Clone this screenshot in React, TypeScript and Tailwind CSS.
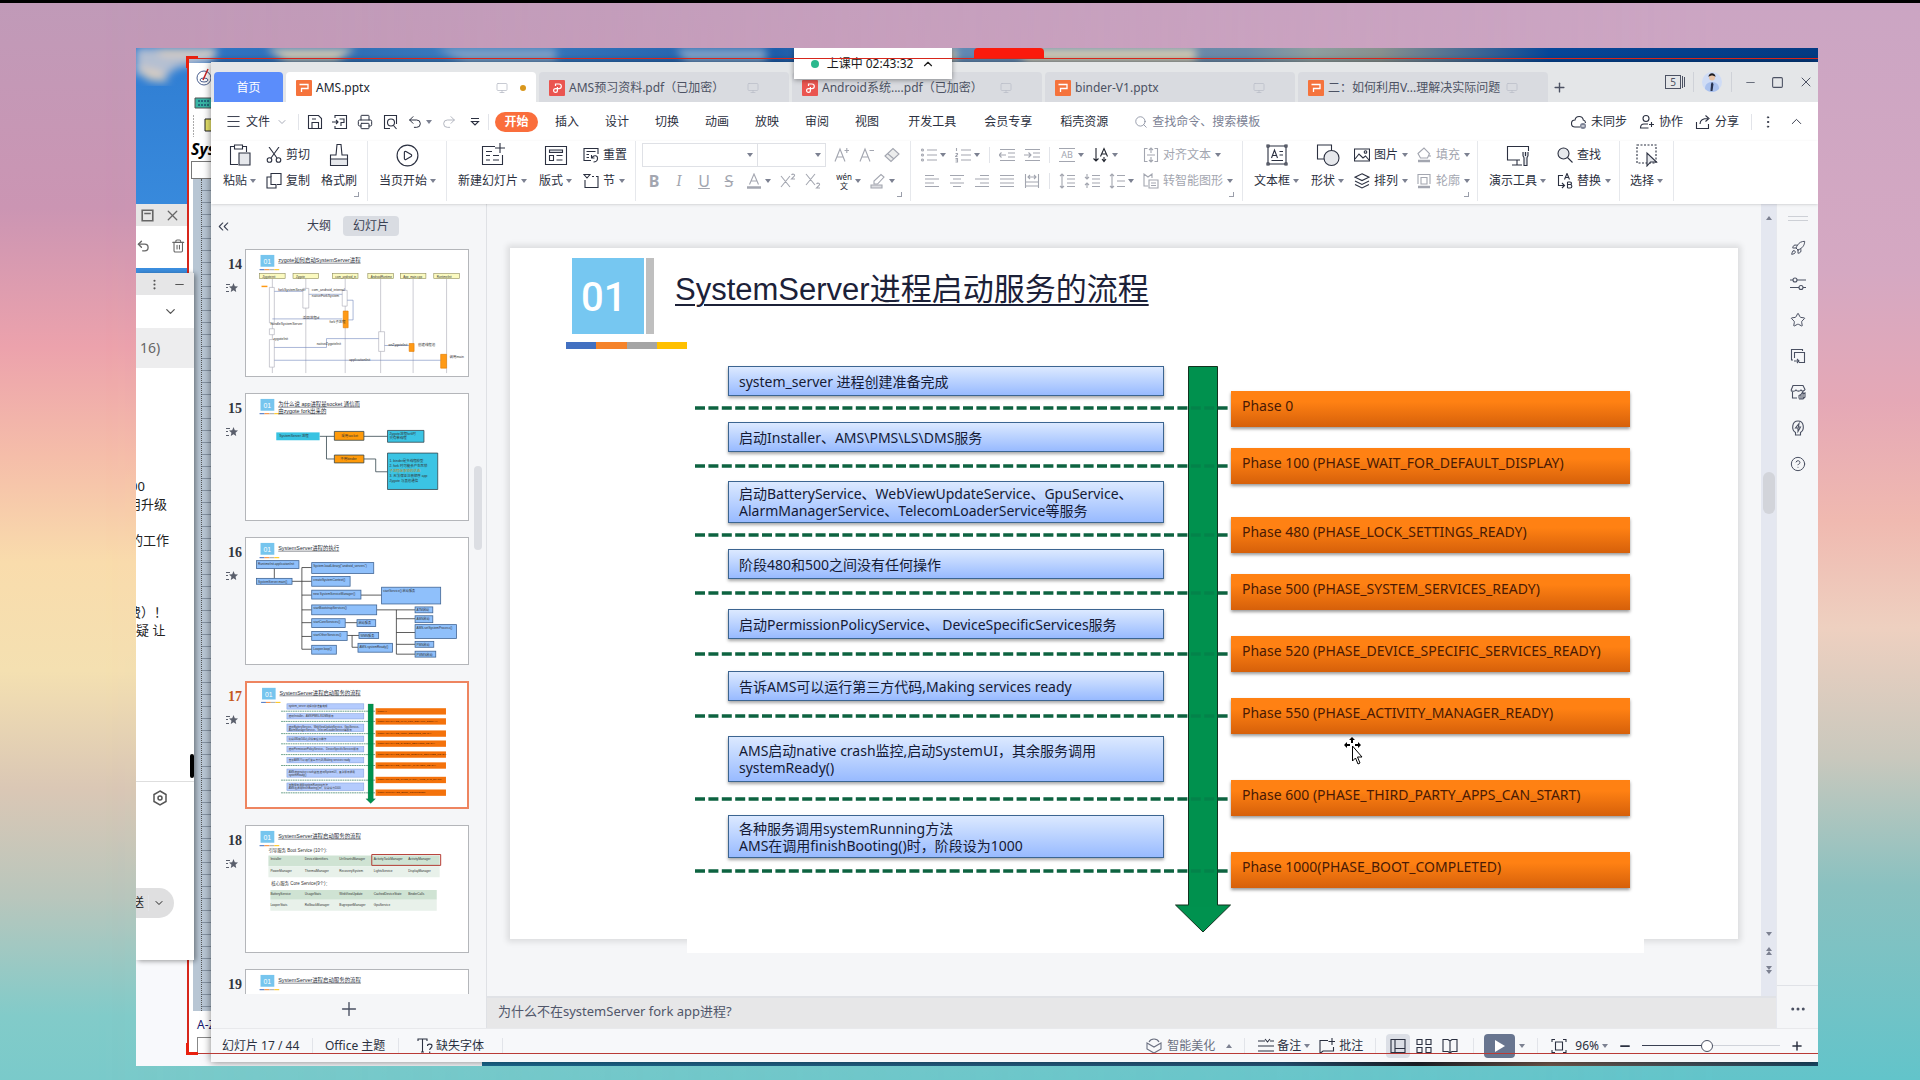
import React from 'react';
import {
  ChevronDown, ChevronUp, ChevronsLeft, CirclePlay, CircleHelp, Ellipsis, EllipsisVertical, Menu, Minus, Monitor,
  Plus, Printer, Redo2, Rocket, Search, Square, Star, Trash2, Undo2, X,
} from 'lucide-react';

type IconProps = { size?: number; box?: number; className?: string; children: React.ReactNode };

const Icon = ({ size = 16, box = 16, className = '', children }: IconProps) => (
  <svg
    width={size}
    height={size}
    viewBox={`0 0 ${box} ${box}`}
    fill="none"
    stroke="currentColor"
    strokeWidth={1.1}
    className={`shrink-0 ${className}`}
    aria-hidden="true"
  >
    {children}
  </svg>
);

const Big = ({ children }: { children: React.ReactNode }) => <Icon size={24} box={24}>{children}</Icon>;

const Caret = ({ up = false }: { up?: boolean }) => (
  <svg width="6" height="4" viewBox="0 0 6 4" className="shrink-0 fill-[#7c8191]" aria-hidden="true">
    <path d={up ? 'M0 4 3 0l3 4z' : 'M0 0h6L3 4z'} />
  </svg>
);

const Corner = () => (
  <span className="absolute right-2 bottom-1 h-[5px] w-[5px] border-r border-b border-[#9a9eaa]" />
);

const Sep = () => <span className="block h-4 w-px shrink-0 bg-[#e2e4e9]" />;

const Logo = ({ pdf = false }: { pdf?: boolean }) => (
  <svg width="16" height="16" viewBox="0 0 16 16" className="shrink-0" aria-hidden="true">
    <rect width="16" height="16" rx="1" className={pdf ? 'fill-[#ea5550]' : 'fill-[#f5733c]'} />
    {pdf ? (
      <path d="M6.5 6V4h3.500a2.300 2.300 0 0 1 0 4.600H6.500a1.900 1.900 0 1 0 1.900 1.900V7" fill="none" stroke="#fff" strokeWidth="1.2" />
    ) : (
      <path d="M3.5 4.500h8.500v4H5.500v3.500" fill="none" stroke="#fff" strokeWidth="1.300" />
    )}
  </svg>
);

/* ---------- title bar ---------- */

const tabs = [
  { name: 'AMS预习资料.pdf（已加密）', pdf: true },
  { name: 'Android系统....pdf（已加密）', pdf: true },
  { name: 'binder-V1.pptx', pdf: false },
  { name: '二：如何利用V...理解决实际问题', pdf: false },
];

const TitleBar = () => (
  <header className="flex h-10 shrink-0 items-end bg-[#e4e6e8] pl-[3px] text-xs text-[#4c5263]">
    <button className="h-[30px] w-[69px] shrink-0 rounded-t-sm bg-[#5b8dfb] pt-0.5 text-white">首页</button>
    <button className="ml-[3px] flex h-[30px] w-[250px] shrink-0 items-center gap-1 rounded-t-sm bg-white px-[10px] pt-0.5 text-[#20242e]">
      <Logo />
      AMS.pptx
      <Monitor size={12} strokeWidth={1.5} className="ml-auto text-[#b5b9c4]" />
      <span className="ml-2 h-1.5 w-1.5 rounded-full bg-[#d9971c]" />
    </button>
    {tabs.map((tab) => (
      <button
        key={tab.name}
        className="ml-[3px] flex h-[30px] w-[250px] items-center gap-1 rounded-t-sm bg-[#d9dbe0] px-[10px] pt-0.5 whitespace-nowrap"
      >
        <Logo pdf={tab.pdf} />
        {tab.name}
        <Monitor size={12} strokeWidth={1.5} className="mr-5 ml-auto shrink-0 text-[#b9bdc8]" />
      </button>
    ))}
    <button aria-label="新建标签" className="ml-1 flex h-[30px] items-center">
      <Plus size={15} strokeWidth={2.2} />
    </button>
    <div className="ml-auto flex h-10 items-center pr-1">
      <button className="flex h-[14px] items-center gap-px text-[10px]" aria-label="窗口 5">
        <span className="h-[14px] w-4 border border-current leading-3">5</span>
        <span className="h-3 w-px bg-current" />
        <span className="h-[10px] w-px bg-current" />
      </button>
      <span className="mx-2 h-5 w-px bg-[#cfd2d8]" />
      <svg width="20" height="20" viewBox="0 0 20 20" role="img" aria-label="用户头像">
        <circle cx="10" cy="10" r="10" fill="#cfdcf5" />
        <path d="M3 17c0-5 3-7 7-7s7 2 7 7c-4 4-10 4-14 0" fill="#a9c1ee" />
        <path d="m10 10 1.500 2-1 7h-2l.5-7z" fill="#27324f" />
        <circle cx="10" cy="5.500" r="3" fill="#e9c4a8" />
        <path d="M6.500 5c0-5 7-5 7 0-2-2-5-2-7 0" fill="#1d1c22" />
      </svg>
      <span className="mr-3 ml-[9px] h-5 w-px bg-[#cfd2d8]" />
      <div className="flex items-center gap-[14px]">
        <button aria-label="最小化"><Minus size={13} strokeWidth={1.5} /></button>
        <button aria-label="最大化"><Square size={13} strokeWidth={2} /></button>
        <button aria-label="关闭"><X size={16} strokeWidth={1.5} /></button>
      </div>
    </div>
  </header>
);

/* ---------- menu row ---------- */

const menus = ['插入', '设计', '切换', '动画', '放映', '审阅', '视图'];
const wideMenus = ['开发工具', '会员专享', '稻壳资源'];

const MenuRow = () => (
  <nav className="flex h-[39px] shrink-0 items-center text-xs text-[#2b3040]">
    <button className="ml-[14px] flex items-center gap-1">
      <Menu size={17} strokeWidth={1.3} />
      文件
      <ChevronDown size={12} strokeWidth={1.5} className="ml-0.5 text-[#8b90a0]" />
    </button>
    <span className="ml-2.5"><Sep /></span>
    <div className="ml-2 flex items-center gap-[9px]">
      <button aria-label="保存">
        <Icon><path d="M1.500 1.500h10l3 3v10h-13zM5 14.500v-6h6.500v6M5 5h4" /></Icon>
      </button>
      <button aria-label="输出为PDF">
        <Icon><path d="M3 4V1.500h11.500v13H3V12M0 8h6M4 6l2 2-2 2M7.500 5H12v3.500H9V12" /></Icon>
      </button>
      <button aria-label="打印"><Printer size={16} strokeWidth={1.5} /></button>
      <button aria-label="打印预览">
        <Icon><path d="M14.500 10V1.500h-12v13H8M11.500 11.500l3 3.500" /><circle cx="9" cy="8.500" r="3.500" /></Icon>
      </button>
      <button aria-label="撤销" className="flex items-center gap-[3px]">
        <Undo2 size={16} strokeWidth={1.5} />
        <Caret />
      </button>
      <button aria-label="恢复" className="text-[#b3b6c0]"><Redo2 size={16} strokeWidth={1.5} /></button>
      <button aria-label="更多" className="ml-1">
        <Icon size={10} box={10}><path d="M1 1.500h8M1.500 4.500h7L5 8z" /></Icon>
      </button>
    </div>
    <span className="ml-2"><Sep /></span>
    <button className="ml-1.5 h-5 w-[43px] rounded-full bg-[#fa6e3c] font-bold text-white">开始</button>
    <div className="ml-[17px] flex gap-[26px]">
      {menus.map((m) => <button key={m}>{m}</button>)}
    </div>
    <div className="ml-[29px] flex gap-7">
      {wideMenus.map((m) => <button key={m}>{m}</button>)}
    </div>
    <label className="ml-[26px] flex items-center gap-1 text-[#7b8194]">
      <Search size={14} strokeWidth={1.3} />
      <input
        className="w-[124px] outline-none placeholder:text-[#7b8194]"
        placeholder="查找命令、搜索模板"
        aria-label="查找命令、搜索模板"
      />
    </label>
    <div className="ml-auto flex items-center gap-3 pr-[13px]">
      <button className="flex items-center gap-1">
        <Icon>
          <path d="M9 13H4a3.500 3.500 0 0 1 0-7 4.200 4.200 0 0 1 8.300 0c1.500.4 2.200 1.500 2.200 3" />
          <circle cx="12" cy="12" r="3" className="fill-[#7b8194]" stroke="none" />
          <path d="M10.500 12h3" stroke="#fff" />
        </Icon>
        未同步
      </button>
      <button className="flex items-center gap-1">
        <Icon><circle cx="7" cy="4.500" r="3" /><path d="M9 10H5c-2 0-3.500 1-3.500 4h8M10 10.500h5M12.500 8v5" /></Icon>
        协作
      </button>
      <button className="flex items-center gap-1">
        <Icon><path d="M1.500 8v6.500h12V10M5 10c0-4 3-5.500 8-5.500M10.500 1.500l3.500 3-3.500 3" /></Icon>
        分享
      </button>
      <div className="flex items-center gap-2">
        <Sep />
        <EllipsisVertical size={16} strokeWidth={1.5} />
      </div>
      <button aria-label="折叠功能区"><ChevronUp size={17} strokeWidth={1.3} /></button>
    </div>
  </nav>
);

/* ---------- ribbon ---------- */

type ToolProps = { icon: React.ReactNode; label: string; caret?: boolean; muted?: boolean; className?: string };

const BigTool = ({ icon, label, caret = true, className = '' }: ToolProps) => (
  <button className={`grid shrink-0 grid-rows-[26px_26px] place-items-center whitespace-nowrap ${className}`}>
    {icon}
    <span className="flex items-center gap-[3px]">{label}{caret && <Caret />}</span>
  </button>
);

const SmallTool = ({ icon, label, caret = false, muted = false, className = '' }: ToolProps) => (
  <button
    className={`flex h-[26px] shrink-0 items-center gap-1 whitespace-nowrap ${muted ? 'text-[#a3a6b0]' : ''} ${className}`}
  >
    {icon}
    {label}
    {caret && <Caret />}
  </button>
);

type MiniProps = { name: string; caret?: boolean; className?: string; children: React.ReactNode };

const Mini = ({ name, caret = false, className = '', children }: MiniProps) => (
  <button aria-label={name} className={`flex shrink-0 items-center gap-[3px] ${className}`}>
    <Icon>{children}</Icon>
    {caret && <Caret />}
  </button>
);

const Letter = ({ name, className = '', children }: MiniProps) => (
  <button aria-label={name} className={`w-4 shrink-0 text-center text-base leading-5 ${className}`}>{children}</button>
);

const Group = ({ className, children }: { className: string; children: React.ReactNode }) => (
  <div className={`relative flex h-[60px] shrink-0 border-r border-[#e6e8ec] pt-px ${className}`}>{children}</div>
);

const Ribbon = () => (
  <div className="z-10 flex h-[63px] shrink-0 text-xs text-[#2b3040] shadow-sm">
    <Group className="w-[157px] pl-3">
      <BigTool
        label="粘贴"
        icon={<Big><path d="M6 3.500H2.500v18H10M15 3.500h3.500V9M6.500 2h8v4h-8z" /><path d="M11 10h11v12H11z" fill="#e6e8ec" /></Big>}
      />
      <div className="ml-[10px]">
        <SmallTool label="剪切" icon={<Icon><path d="M3 0l8 11M13 0 5 11" /><circle cx="3.500" cy="13" r="2.300" /><circle cx="12.500" cy="13" r="2.300" /></Icon>} />
        <SmallTool label="复制" icon={<Icon><path d="M5 4V.5h10v11h-4" /><path d="M5 4H1v11h9v-3.500H5z" /></Icon>} />
      </div>
      <BigTool
        className="ml-[11px]"
        caret={false}
        label="格式刷"
        icon={<Big><path d="M3.500 16h17v6.500h-17z" fill="#e6e8ec" /><path d="M3.500 16v-4H9l1-10.500h4L15 12h5.500v4" /></Big>}
      />
      <Corner />
    </Group>
    <Group className="w-[79px] pl-[11px]">
      <BigTool label="当页开始" icon={<CirclePlay size={25} strokeWidth={1.1} />} />
    </Group>
    <Group className="w-[189px] pl-[11px]">
      <BigTool
        label="新建幻灯片"
        icon={<Big><path d="M14 3.500H1.500v18h20V12M19 0v10M14 5h10M5 8.500h6M5 12.500h4M5 17h4M12 12.500h6M12 17h6" /></Big>}
      />
      <BigTool
        className="ml-3"
        label="版式"
        icon={<Big><path d="M1.500 3.500h21v18h-21zM5.500 12.500h4v5h-4zM12.500 12.500h6M12.500 17h6" /><path d="M5.500 7h13v2.500h-13z" fill="#d5d8de" /></Big>}
      />
      <div className="ml-[11px]">
        <SmallTool label="重置" icon={<Icon><path d="M8 13.500H1V1.500h14V7M3.500 4.500h9M3.500 7.500H6M3.500 10.500H6M8.500 8v3h3M9 10.500c2-3 6-2 5.500 1.500-.3 2-2 3-4 3" /></Icon>} />
        <SmallTool label="节" caret icon={<Icon><path d="M1 1.500h6L4 5zM9 3.500h2M13 3.500h2v11H2V7" /></Icon>} />
      </div>
    </Group>
    <Group className="w-[275px] flex-col pl-1.5 text-[#a3a6b0]">
      <div className="flex h-[26px] items-center">
        <div className="relative flex h-6 w-[116px] items-center border border-[#dfe1e6]">
          <select aria-label="字体" className="h-full w-full appearance-none outline-none" />
          <span className="absolute right-1"><Caret /></span>
        </div>
        <div className="relative flex h-6 w-[68px] items-center border border-l-0 border-[#dfe1e6]">
          <select aria-label="字号" className="h-full w-full appearance-none outline-none" />
          <span className="absolute right-1"><Caret /></span>
        </div>
        <div className="ml-2 flex items-center gap-[9px]">
          <Mini name="增大字号"><path d="M1 14.500 6 2l5 12.500M3 10h6M10.500 3.500H15M12.800 1v5" /></Mini>
          <Mini name="减小字号"><path d="M1 14.500 6 2l5 12.500M3 10h6M10.500 3.500H15" /></Mini>
          <Mini name="清除格式"><path d="M1 9 9 1.500 15 7l-8 7.500zM3.500 6.500 10 12" fill="#eceded" /></Mini>
        </div>
      </div>
      <div className="flex h-[26px] items-center gap-[9px] pl-1">
        <Letter name="加粗" className="font-bold">B</Letter>
        <Letter name="倾斜" className="font-serif italic">I</Letter>
        <Letter name="下划线" className="underline">U</Letter>
        <Letter name="删除线" className="line-through">S</Letter>
        <Mini name="字体颜色" caret><path d="M3.500 11.500 8 1l4.500 10.500M5 8h6" /><path d="M1 14.500h14" strokeWidth="2.500" /></Mini>
        <Mini name="上标"><path d="m1 3 9 11M10 3 1 14M11.500 2c1-1.500 3.500-1 3 .8L11.500 6H15" /></Mini>
        <Mini name="下标"><path d="m1 1 9 11M10 1 1 12M11.500 11c1-1.500 3.500-1 3 .8l-3 3.200H15" /></Mini>
        <button aria-label="拼音指南" className="ml-1.5 flex items-center gap-[3px] text-[#20242e]">
          <span className="w-4 text-center text-[8px] leading-[9px]"><span className="block">wén</span>文</span>
          <Caret />
        </button>
        <Mini name="突出显示" caret><path d="M4 11V8l7-6.500L14 4l-6.500 7z" /><path d="M1 12h11v3H1z" fill="#dcdde1" /></Mini>
      </div>
      <Corner />
    </Group>
    <Group className="w-[332px] flex-col text-[#a3a6b0]">
      <div className="flex h-[26px] items-center gap-[9px] pl-[10px]">
        <Mini name="项目符号" caret><path d="M6 3h10M6 8h10M6 13h10" /><circle cx="1.500" cy="3" r="1" /><circle cx="1.500" cy="8" r="1" /><circle cx="1.500" cy="13" r="1" /></Mini>
        <Mini name="编号" caret><path d="M6 3h10M6 8h10M6 13h10M1.500 1v3M.5 6.500h2v1l-2 2h2M.5 11.500h2v3.500h-2M.5 13h2" /></Mini>
        <Sep />
        <Mini name="减少缩进"><path d="M1 2.500h15M9 6h7M9 10h7M1 13.500h15M0 8h7M2.500 5.500 0 8l2.500 2.500" /></Mini>
        <Mini name="增加缩进"><path d="M1 2.500h15M9 6h7M9 10h7M1 13.500h15M0 8h7M4.500 5.500 7 8l-2.500 2.500" /></Mini>
        <Sep />
        <button aria-label="字符间距" className="flex items-center gap-[3px]">
          <span className="w-4 border-y border-current text-center text-[9px] leading-3">AB</span>
          <Caret />
        </button>
        <Mini name="文字方向" caret className="text-[#20242e]"><path d="M3 1v13M.5 11.500 3 14l2.500-2.500M7.500 9.500 11 1.500l3.500 8M8.500 7h5M11 10v4M9 12l2 2.500 2-2.500" /></Mini>
        <SmallTool className="ml-4" muted caret label="对齐文本" icon={<Icon><path d="M4.500 1.500h-3v13h3M11.500 1.500h3v13h-3M4 8h8M8 1v5M6 3l2-2 2 2M8 10v5M6 13l2 2 2-2" /></Icon>} />
      </div>
      <div className="flex h-[26px] items-center gap-[9px] pl-[13px]">
        <Mini name="左对齐"><path d="M1 2.500h9M1 6h14M1 10h9M1 13.500h14" /></Mini>
        <Mini name="居中"><path d="M1 2.500h14M4 6h8M1 10h14M4 13.500h8" /></Mini>
        <Mini name="右对齐"><path d="M6 2.500h9M1 6h14M6 10h9M1 13.500h14" /></Mini>
        <Mini name="两端对齐"><path d="M1 2.500h14M1 6h14M1 10h14M1 13.500h14" /></Mini>
        <Mini name="分散对齐"><path d="M1.500 1v14M14.500 1v14M1.500 9h13M1.500 13h13M4 4h8M6 2 4 4l2 2M10 2l2 2-2 2" /></Mini>
        <Sep />
        <Mini name="增大段距"><path d="M3 1v14M1 3l2-2 2 2M1 13l2 2 2-2M8 2.500h8M8 6h8M8 10h8M8 13.500h8" /></Mini>
        <Mini name="减小段距"><path d="M3 1v5M1 4l2 2 2-2M3 15v-5M1 12l2-2 2 2M8 2.500h8M8 6h8M8 10h8M8 13.500h8" /></Mini>
        <Mini name="行距" caret><path d="M3 1v14M1 3l2-2 2 2M1 13l2 2 2-2M8 2.500h8M8 8h8M8 13.500h8" /></Mini>
        <SmallTool muted caret label="转智能图形" icon={<Icon><path d="M5 13H1V1l4 3 4-3v4M6 7h9v8H6zM8 10h5M8 12.500h5" /></Icon>} />
      </div>
      <Corner />
    </Group>
    <Group className="w-[235px] pl-[11px]">
      <BigTool
        label="文本框"
        icon={<Big><path d="M3 3h18v18H3zM6.500 15l3-8 3 8M7.500 12.500h4M14.500 8.500H18M14.500 12H18M6.500 17.500H18" /><path d="M2 2h2v2H2zM20 2h2v2h-2zM2 20h2v2H2zM20 20h2v2h-2z" fill="#fff" /></Big>}
      />
      <BigTool className="ml-3" label="形状" icon={<Big><path d="M1.500 2h14v14h-14z" /><circle cx="15.500" cy="15" r="7.500" fill="#e6e8ec" /></Big>} />
      <div className="ml-[10px]">
        <SmallTool caret label="图片" icon={<Icon><path d="M.5 2h15v12H.5zM1 12l4-5 4 4 2.500-2 3.500 4" /><circle cx="11.500" cy="5" r="1.300" /></Icon>} />
        <SmallTool caret label="排列" icon={<Icon><path d="m8 .8 7 3.400-7 3.400-7-3.400zM1 8l7 3.400L15 8M1 11.500l7 3.500 7-3.500" /></Icon>} />
      </div>
      <div className="ml-2">
        <SmallTool muted caret label="填充" icon={<Icon><path d="M2 6.500 8 1l5.500 5.500-2 4.500h-7zM14 8v2" /><path d="M2 14h12" strokeWidth="2.500" /></Icon>} />
        <SmallTool muted caret label="轮廓" icon={<Icon><path d="M2 11V1.500h12V11M5 11V4.500h6V11z" /><path d="M2 14h12" strokeWidth="2.500" /></Icon>} />
      </div>
      <Corner />
    </Group>
    <Group className="w-[142px] pl-[11px]">
      <BigTool label="演示工具" icon={<Big><path d="M14 17H1.500V3.500h21V8M11 17v5M6 22h10" /><path d="M17 9v3.500c0 1 1 1.500 1 2.500v7.500h3V15c0-1 1-1.500 1-2.500V9M19.500 9v4" fill="#e6e8ec" /></Big>} />
      <div className="ml-[11px]">
        <SmallTool label="查找" icon={<Icon><circle cx="6.500" cy="6.500" r="5.500" fill="#e6e8ec" /><path d="m10.500 10.500 5 5" /></Icon>} />
        <SmallTool caret label="替换" icon={<Icon><path d="M6 2.500H1.500v10H7M5 10l2.500 2.500L5 15M7.500 6.500 10 .5l2.500 6M8.500 4.500h3M10.500 9h2.500c2 0 2 2.500 0 2.500h-2.500M10.500 15V9M13 11.500c2.500 0 2.500 3.500 0 3.500h-2.500" /></Icon>} />
      </div>
    </Group>
    <Group className="w-[54px] pl-[10px]">
      <BigTool label="选择" icon={<Big><path d="M2 2h19v18H2z" strokeDasharray="2 1.500" /><path d="M12 10v13l3.500-4h6z" fill="#e6e8ec" /></Big>} />
    </Group>
  </div>
);

/* ---------- deck data ---------- */

const steps = [
  { y: 118, h: 30, line: 160, lines: ['system_server 进程创建准备完成'], phaseY: 143, phase: 'Phase 0' },
  { y: 174, h: 30, line: 218, lines: ['启动Installer、AMS\\PMS\\LS\\DMS服务'], phaseY: 200, phase: 'Phase 100 (PHASE_WAIT_FOR_DEFAULT_DISPLAY)' },
  { y: 233, h: 42, line: 287, lines: ['启动BatteryService、WebViewUpdateService、GpuService、', 'AlarmManagerService、TelecomLoaderService等服务'], phaseY: 269, phase: 'Phase 480 (PHASE_LOCK_SETTINGS_READY)' },
  { y: 301, h: 30, line: 345, lines: ['阶段480和500之间没有任何操作'], phaseY: 326, phase: 'Phase 500 (PHASE_SYSTEM_SERVICES_READY)' },
  { y: 361, h: 30, line: 406, lines: ['启动PermissionPolicyService、 DeviceSpecificServices服务'], phaseY: 388, phase: 'Phase 520 (PHASE_DEVICE_SPECIFIC_SERVICES_READY)' },
  { y: 423, h: 30, line: 468, lines: ['告诉AMS可以运行第三方代码,Making services ready'], phaseY: 450, phase: 'Phase 550 (PHASE_ACTIVITY_MANAGER_READY)' },
  { y: 488, h: 46, line: 551, lines: ['AMS启动native crash监控,启动SystemUI，其余服务调用', 'systemReady()'], phaseY: 532, phase: 'Phase 600 (PHASE_THIRD_PARTY_APPS_CAN_START)' },
  { y: 567, h: 43, line: 623, lines: ['各种服务调用systemRunning方法', 'AMS在调用finishBooting()时，阶段设为1000'], phaseY: 604, phase: 'Phase 1000(PHASE_BOOT_COMPLETED)' },
];

const FlowLines = () => (
  <>
    <path d="M678.500 118.500h29V657h13l-27.500 27-27.500-27h13z" fill="#00924f" stroke="#12331f" />
    {steps.map((s) => (
      <path key={s.line} d={`M185 ${s.line}H721`} stroke="#0d6340" strokeWidth="3.500" strokeDasharray="10 3.400" />
    ))}
    <path d="M679 119h28v540h-28z" fill="#00924f" fillOpacity=".7" />
  </>
);

/* ---------- thumbnails ---------- */

const Txt = ({ x, y, s = 3.5, fill = '#333', children }: { x: number; y: number; s?: number; fill?: string; children: React.ReactNode }) => (
  <text x={x} y={y} fontSize={s} fill={fill} stroke="none">{children}</text>
);

const heads = [
  [13, 'Zygoteinit'], [47, 'Zygote'], [87, 'com_android_internal'], [123, 'AndroidRuntime.cpp'], [156, 'App_main.cpp'], [190, 'RuntimeInit'],
] as const;

const Thumb14 = () => (
  <g fill="none" stroke="#a9a9b4" strokeWidth=".6">
    {heads.map(([x, name]) => (
      <g key={name}>
        <path d={`M${x + 13} 29v96`} />
        <rect x={x} y="24" width="26" height="5" fill="#fbfac0" stroke="#8c8a55" />
        <Txt x={x + 3} y={28} s={3}>{name.slice(0, 14)}</Txt>
      </g>
    ))}
    <g fill="#fff">
      <path d="M23 38h5v36h-5zM57 39h6v20h-6zM97 41h5v16h-5zM23 80h5v6h-5zM23 91h5v28h-5zM134 83h6v20h-6z" />
    </g>
    <path d="M98 62h5v17h-5zM165 95h5v8h-5zM197 106h6v14h-6z" fill="#ff9a16" stroke="#e07b00" />
    <path d="M28 42h29M63 45h34M97 70H26M102 51h6v20h-5M28 99h53v-9h53M140 97h25M28 112h169" stroke="#7187bd" />
    <path d="M15 37h6" stroke="#ff9a16" strokeWidth="1.500" />
    <Txt x={32} y={42}>forkSystemServer</Txt>
    <Txt x={66} y={42}>com_android_internal</Txt>
    <Txt x={66} y={48}>nativeForkSystem</Txt>
    <Txt x={57} y={70}>返回进程id</Txt>
    <Txt x={84} y={74}>fork子进程</Txt>
    <Txt x={24} y={76}>handleSystemServer</Txt>
    <Txt x={27} y={91}>zygoteInit</Txt>
    <Txt x={71} y={96}>nativeZygoteInit</Txt>
    <Txt x={144} y={98}>onZygoteInit</Txt>
    <Txt x={104} y={113}>applicationInit</Txt>
    <Txt x={174} y={98}>创建线程池</Txt>
    <Txt x={206} y={110}>调用main</Txt>
  </g>
);

const Thumb15 = () => (
  <g stroke="#33454d" strokeWidth=".8">
    <path d="M74 43h15M81 43v23h8M119 43h24M119 66h12v13h12" fill="none" />
    <rect x="30" y="39" width="44" height="8" fill="#38c3e2" stroke="none" />
    <path d="M89 38h30v9H89zM89 62h30v8H89z" fill="#ff9a0a" />
    <path d="M143 37h37v12h-37zM143 60h51v37h-51z" fill="#3bc4e4" />
    <Txt x={33} y={44}>SystemServer 进程</Txt>
    <Txt x={96} y={44}>采用socket</Txt>
    <Txt x={95} y={67}>不用binder</Txt>
    <Txt x={145} y={42}>Zygote进程fork时</Txt>
    <Txt x={145} y={46}>只有单线程</Txt>
    <Txt x={145} y={69}>1. binder是多线程模型</Txt>
    <Txt x={145} y={74}>2. fork 时可能会产生死锁</Txt>
    <Txt x={145} y={79} fill="#c08a20">子进程继承锁的状态</Txt>
    <Txt x={145} y={84}>3. 无法保证注册顺序 app</Txt>
    <Txt x={145} y={89}>Zygote 与其他通信</Txt>
  </g>
);

const nodes16: [number, number, number, number, string][] = [
  [10, 23, 43, 8, 'RuntimeInit.applicationInit'], [10, 41, 36, 6, 'SystemServer.main()'],
  [66, 25, 63, 11, 'System.loadLibrary("android_servers")'], [66, 39, 39, 10, 'createSystemContext()'],
  [66, 53, 50, 9, 'new SystemServiceManager()'], [137, 50, 60, 17, 'startService() 启动服务'],
  [66, 68, 66, 10, 'startBootstrapServices()'], [66, 82, 34, 9, 'startCoreServices()'],
  [112, 83, 19, 7, '启动服务'], [66, 95, 36, 9, 'startOtherServices()'], [114, 96, 20, 6, 'WMS服务'],
  [66, 109, 25, 9, 'Looper.loop()'], [113, 107, 35, 9, 'AMS.systemReady()'],
  [171, 70, 18, 6, 'ATM启动'], [171, 79, 18, 7, 'AMS启动'], [171, 88, 42, 14, 'AMS.setSystemProcess()'],
  [171, 105, 19, 6, 'PMS启动'], [171, 115, 21, 6, 'PWMS启动'],
];

const Thumb16 = () => (
  <g stroke="#3f6494" strokeWidth=".8">
    <path
      d="M28 31v10M46 44h10M56 30v83M56 30h10M56 44h10M56 58h10M56 73h10M56 86h10M56 100h10M56 113h10M116 58h21M132 73h39M152 73v45h19M152 82h19M152 96h19M152 108h19M100 86h12M102 99h12M107 99v12h6"
      fill="none"
      stroke="#333"
    />
    {nodes16.map(([x, y, w, h, label]) => (
      <g key={label}>
        <rect x={x} y={y} width={w} height={h} fill="#8fc0fb" />
        <Txt x={x + 1.5} y={y + 4.5} s={3.2}>{label}</Txt>
      </g>
    ))}
  </g>
);

const Thumb17 = () => (
  <g transform="scale(.182)">
    {steps.map((s) => (
      <g key={s.y}>
        <rect x="218" y={s.y} width="436" height={s.h} fill="#b4cbfd" stroke="#7d9cdb" strokeWidth="3" />
        {s.lines.map((l, i) => <Txt key={l} x={228} y={s.y + 20 + i * 17} s={15}>{l}</Txt>)}
      </g>
    ))}
    <FlowLines />
    {steps.map((s) => (
      <g key={s.phase}>
        <rect x="721" y={s.phaseY} width="399" height="36" fill="#f4720b" />
        <Txt x={732} y={s.phaseY + 20} s={14} fill="#4a1800">{s.phase}</Txt>
      </g>
    ))}
  </g>
);

const services = [
  ['Installer', 'DeviceIdentifiers', 'UriGrantsManager', 'ActivityTaskManager', 'ActivityManager'],
  ['PowerManager', 'ThermalManager', 'RecoverySystem', 'LightsService', 'DisplayManager'],
  ['BatteryService', 'UsageStats', 'WebViewUpdate', 'CachedDeviceState', 'BinderCalls'],
  ['LooperStats', 'RollbackManager', 'BugreportManager', 'GpuService', ''],
];
const serviceY = [31, 43, 66, 77];

const Thumb18 = () => (
  <g>
    <Txt x={22} y={26} s={4.5}>引导服务 Boot Service (10个):</Txt>
    <path d="M22 30h174v11H22zM24 65h169v10H24z" fill="#cfe3d3" />
    <path d="M22 41h174v11H22zM24 75h169v11H24z" fill="#e8f1ea" />
    <Txt x={25} y={60} s={4.5}>核心服务 Core Service(9个)：</Txt>
    {services.map((row, r) => row.map((name, c) => (
      <Txt key={`${r}-${c}`} x={24 + c * 35} y={serviceY[r] + 4} s={3.2}>{name}</Txt>
    )))}
    <path d="M127 29h70v11h-70z" fill="none" stroke="#b43a32" />
  </g>
);

const flowTitle = 'SystemServer进程启动服务的流程';
const thumbs = [
  { no: 14, title: ['zygote如何启动SystemServer进程'], body: <Thumb14 /> },
  { no: 15, title: ['为什么说 app进程是socket 通信而', '由zygote fork出来的'], body: <Thumb15 /> },
  { no: 16, title: ['SystemServer进程的执行'], body: <Thumb16 /> },
  { no: 17, title: [flowTitle], body: <Thumb17 />, active: true },
  { no: 18, title: [flowTitle], body: <Thumb18 /> },
  { no: 19, title: [flowTitle], body: null },
];

const SlidePanel = () => (
  <aside className="flex w-[276px] shrink-0 flex-col border-r border-[#dfe1e5] bg-[#f5f6f8]">
    <div className="flex h-11 shrink-0 items-center pl-1 text-xs text-[#3a4052]">
      <button aria-label="收起"><ChevronsLeft size={17} strokeWidth={1.5} /></button>
      <button className="ml-[75px]">大纲</button>
      <button className="ml-3 h-5 w-14 rounded-sm bg-[#d9dce2]">幻灯片</button>
    </div>
    <div className="relative mt-px min-h-0 flex-1 overflow-hidden">
      <ol className="flex flex-col gap-4">
        {thumbs.map((t) => (
          <li key={t.no} className="flex">
            <div className="flex w-[34px] shrink-0 flex-col items-end gap-[10px] pt-2 pr-[3px]">
              <span className={`font-['Liberation_Serif',serif] text-sm leading-4 font-bold ${t.active ? 'text-[#c5591d]' : 'text-[#33363f]'}`}>
                {t.no}
              </span>
              {t.no < 19 && (
                <svg width="12" height="10" viewBox="0 0 12 10" className="mr-1 fill-[#5a5f6c]" aria-hidden="true">
                  <path d="M0 1h4v1H0zM0 4h2v1H0zM0 8h3v1H0zM7.500 0l1.300 3.200 3.200.3-2.500 2.200.8 3.300-2.800-1.800L4.700 9l.8-3.300L3 3.500l3.200-.3z" />
                </svg>
              )}
            </div>
            <button
              className={`h-[128px] w-[224px] bg-white ${t.active ? 'border-2 border-[#ee8560]' : 'border border-[#b4b6ba]'}`}
              aria-label={`幻灯片 ${t.no}`}
            >
              <svg viewBox="0 0 224 128" className="h-full w-full font-['Liberation_Sans','Noto_Sans_CJK_SC',sans-serif]">
                <rect x="14" y="5" width="14" height="12" fill="#76c5ee" />
                <Txt x={17} y={14} s={7} fill="#fff">01</Txt>
                <path d="M13 20h5" stroke="#3f6dbf" />
                <path d="M18 20h5" stroke="#f58025" />
                <path d="M23 20h5" stroke="#a5a5a5" />
                <path d="M28 20h5" stroke="#ffc000" />
                {t.title.map((line, i) => (
                  <text key={line} x="32" y={12 + i * 7} fontSize="5.500" fill="#262b36" textDecoration="underline">{line}</text>
                ))}
                {t.body}
              </svg>
            </button>
          </li>
        ))}
      </ol>
      <span className="absolute top-[217px] right-1 h-[84px] w-2 rounded-full bg-[#dcdee3]" />
    </div>
    <button aria-label="新建幻灯片" className="flex h-[34px] shrink-0 items-center justify-center pb-1 text-[#4a5062]">
      <Plus size={22} strokeWidth={1.5} />
    </button>
  </aside>
);

/* ---------- slide ---------- */

const Slide = () => (
  <article className="relative mx-[23px] mt-11 mb-[57px] min-w-0 flex-1 bg-white shadow-[0_0_6px_3px_rgba(0,0,0,0.1)]">
    <span className="absolute top-full left-[177px] h-[14px] w-[957px] bg-white" />
    <div className="absolute top-[10px] left-[62px] flex h-[76px] gap-0.5">
      <span className="flex w-[72px] items-center bg-[#76c7f1] pt-1 pl-[9px] font-['Roboto',sans-serif] text-[40px] leading-none font-medium text-white">01</span>
      <span className="w-2 bg-[#bfbfbf]" />
    </div>
    <div className="absolute top-[94px] left-[56px] flex h-[7px] w-[121px]">
      <span className="flex-1 bg-[#4270c1]" />
      <span className="flex-1 bg-[#f5832a]" />
      <span className="flex-1 bg-[#a5a5a5]" />
      <span className="flex-1 bg-[#ffc000]" />
    </div>
    <h1 className="absolute top-[22px] left-[165px] font-['Liberation_Sans','Noto_Sans_CJK_SC',sans-serif] text-[31px] leading-10 whitespace-nowrap text-[#1c2138] underline decoration-2 underline-offset-4">
      {flowTitle}
    </h1>
    <svg className="absolute top-0 left-0" width="740" height="690" viewBox="0 0 740 690" fill="none" aria-hidden="true">
      <FlowLines />
    </svg>
    {steps.map((s) => (
      <React.Fragment key={s.phase}>
        <div
          className="absolute left-[218px] flex w-[436px] flex-col justify-center border border-[#3c6591] bg-linear-to-b from-[#dce9ff] to-[#98baff] pl-[10px] text-sm leading-[17px] whitespace-nowrap text-[#141a35] shadow-[0_2px_3px_rgba(0,0,0,0.35)]"
          style={{ top: s.y, height: s.h }}
        >
          {s.lines.map((l) => <p key={l}>{l}</p>)}
        </div>
        <div
          className="absolute left-[721px] h-9 w-[399px] bg-linear-to-b from-[#ff8113] from-30% to-[#d6600a] pt-[5px] pl-[11px] text-sm leading-5 whitespace-nowrap text-[#4a1a04] shadow-[0_2px_3px_rgba(0,0,0,0.4)]"
          style={{ top: s.phaseY }}
        >
          {s.phase}
        </div>
      </React.Fragment>
    ))}
    <svg className="absolute top-[489px] left-[834px]" width="20" height="28" viewBox="0 0 20 28" aria-hidden="true">
      <path d="M8 0l3 3H9v3H7V3H5zM0 8l3-3v2h3v2H3v2zM17 8l-3-3v2h-3v2h3v2z" fill="#000" />
      <path d="M8.500 9v15l3-3 2.500 6 2-1-2.500-6H18z" fill="#fff" stroke="#000" />
    </svg>
  </article>
);

const VScroll = () => (
  <div className="flex w-[15px] shrink-0 flex-col items-center bg-[#e4e7f0]">
    <span className="flex h-7 items-center"><Caret up /></span>
    <span className="mt-[240px] h-[42px] w-3 rounded-full bg-[#d2d4da]" />
    <div className="mt-auto mb-[22px] flex flex-col items-center gap-[11px]">
      <Caret />
      <span><Caret up /><Caret up /></span>
      <span><Caret /><Caret /></span>
    </div>
  </div>
);

const SideBar = () => (
  <aside className="flex w-[42px] shrink-0 flex-col items-center border-l border-[#e6e8ee] bg-[#f5f6f8] text-[#4a5062]">
    <span className="mt-3 h-[5px] w-5 border-y border-[#cdd0d6]" />
    <div className="mt-[19px] flex flex-col gap-5">
      <button aria-label="快捷"><Rocket size={16} strokeWidth={1.5} /></button>
      <button aria-label="设置">
        <Icon><path d="M0 4h3M7 4h9M0 11.500h9M13 11.500h3" /><circle cx="5" cy="4" r="2" /><circle cx="11" cy="11.500" r="2" /></Icon>
      </button>
      <button aria-label="动画"><Star size={16} strokeWidth={1.5} /></button>
      <button aria-label="切换">
        <Icon><path d="M3 12H1.500V1.500h11V3M9 14.500h5.500V4.500h-10V10M4 13h5M7 11l2 2-2 2" /></Icon>
      </button>
      <button aria-label="素材">
        <Icon><path d="M7 14H2.500V8M1 6.500 3 1.500h10l2 4c-1 2-3 2-4 .5-1 1.500-4 1.500-5 0-1 1.500-4 1.500-5 .5M9 14.500v-3l2-1v4M11 10.500l2-3v7.500M13 10l2-1v4l-2 2H9" /></Icon>
      </button>
      <button aria-label="灵感">
        <Icon><path d="M5.500 12.500C1 9.500 2 1 8 1s7 8.500 2.500 11.500v2.500h-5zM9 3.500 5.500 8H8v3.500L10.500 7H8.500z" /></Icon>
      </button>
      <button aria-label="帮助"><CircleHelp size={16} strokeWidth={1.5} /></button>
    </div>
    <button aria-label="更多" className="mt-auto flex h-[43px] w-full items-center justify-center border-t border-[#e0e2e7] pt-1">
      <Ellipsis size={18} strokeWidth={2} />
    </button>
  </aside>
);

const StatusBar = () => (
  <footer className="flex h-[34px] shrink-0 items-center border-t border-[#e8e9ec] bg-[#f7f8fa] pr-[14px] pl-[11px] text-xs whitespace-nowrap text-[#2b3040]">
    <span className="w-[90px]">幻灯片 17 / 44</span>
    <Sep />
    <span className="mx-3 w-[61px]">Office 主题</span>
    <Sep />
    <button className="mx-[18px] flex items-center gap-[3px]">
      <Icon><path d="M1 3V1h9v2M5.500 1v13M4 14h3M10.500 8c0-2.500 4.500-2.500 4.500 0 0 2-2.300 2-2.300 4M12.700 13.500V15" /></Icon>
      缺失字体
    </button>
    <Sep />
    <button className="ml-auto flex items-center gap-[5px] text-[#6b7081]">
      <Icon><path d="M3 4c2-4 8-4 10 0M1 5l7 4 7-4v6l-7 4-7-4z" /></Icon>
      智能美化
      <span className="ml-1.5"><Caret up /></span>
    </button>
    <span className="ml-3"><Sep /></span>
    <button className="ml-[13px] flex items-center gap-[3px]">
      <Icon><path d="M0 3h7M12 3h4M0 8h16M0 13h16M7 1l2.500 3L12 1" /></Icon>
      备注
      <Caret />
    </button>
    <button className="ml-[9px] flex items-center gap-1">
      <Icon><path d="M9 2.500H1v13l3-2.500h10.500V9M13 0v7M9.500 3.500H16" /></Icon>
      批注
    </button>
    <span className="ml-3"><Sep /></span>
    <div className="ml-[10px] flex items-center gap-1.5">
      <button aria-label="普通视图" className="flex h-6 w-6 items-center justify-center rounded-sm bg-[#dcdfe6]">
        <Icon><path d="M1 1.500h14v13H1zM5 1.500v13M5 10.500h10" /></Icon>
      </button>
      <button aria-label="幻灯片浏览">
        <Icon><path d="M1 1.500h5v5H1zM10 1.500h5v5h-5zM1 9.500h5v5H1zM10 9.500h5v5h-5z" /></Icon>
      </button>
      <button aria-label="阅读视图" className="ml-1">
        <Icon><path d="M8 3v12L6 13.500H1v-12h5zl2-1.500h5v12h-5L8 15" /></Icon>
      </button>
    </div>
    <span className="ml-[15px]"><Sep /></span>
    <button aria-label="播放" className="ml-[10px] flex h-6 w-[31px] items-center justify-center rounded-sm bg-[#68758f]">
      <svg width="10" height="12" viewBox="0 0 10 12" className="fill-white" aria-hidden="true"><path d="M0 0l10 6-10 6z" /></svg>
    </button>
    <span className="ml-1"><Caret /></span>
    <span className="ml-3"><Sep /></span>
    <button aria-label="适应窗口" className="ml-[13px]">
      <Icon><path d="M4 1.500H1V4M12 1.500h3V4M4 14.500H1V12M12 14.500h3V12M4.500 4h7v8h-7z" /></Icon>
    </button>
    <button className="ml-2 flex items-center gap-[3px]">96%<Caret /></button>
    <button aria-label="缩小" className="ml-[10px]"><Minus size={14} strokeWidth={3} /></button>
    <input
      type="range"
      aria-label="缩放"
      defaultValue={47}
      className="mx-[10px] h-px w-[138px] appearance-none bg-linear-to-r from-[#3a4052] from-47% to-[#d0d3da] to-47% [&::-webkit-slider-thumb]:h-3 [&::-webkit-slider-thumb]:w-3 [&::-webkit-slider-thumb]:appearance-none [&::-webkit-slider-thumb]:rounded-full [&::-webkit-slider-thumb]:border [&::-webkit-slider-thumb]:border-[#4a5062] [&::-webkit-slider-thumb]:bg-white"
    />
    <button aria-label="放大"><Plus size={14} strokeWidth={2.5} /></button>
  </footer>
);

const OfficeWindow = () => (
  <main className="absolute top-[14px] right-0 bottom-1 left-[75px] flex flex-col overflow-hidden bg-white shadow-[0_0_8px_rgba(0,0,0,0.5)]">
    <TitleBar />
    <MenuRow />
    <Ribbon />
    <div className="flex min-h-0 flex-1">
      <SlidePanel />
      <section className="flex min-w-0 flex-1 flex-col bg-[#f5f6f8]">
        <div className="flex min-h-0 flex-1">
          <Slide />
          <VScroll />
        </div>
        <input
          aria-label="备注"
          defaultValue="为什么不在systemServer fork app进程?"
          className="h-8 shrink-0 border-t-2 border-[#e0e2e6] bg-[#e7e7e8] pb-1.5 pl-[11px] text-[13px] text-[#50566a] outline-none"
        />
      </section>
      <SideBar />
    </div>
    <StatusBar />
  </main>
);

/* ---------- windows behind ---------- */

const EditorWindow = () => (
  <div className="absolute top-[15px] bottom-[13px] left-[53px] w-24 overflow-hidden bg-white">
    <svg width="24" height="80" viewBox="0 0 24 80" fill="none" aria-hidden="true">
      <circle cx="15" cy="15" r="7" stroke="#4a5f8f" />
      <ellipse cx="15" cy="17" rx="4" ry="2" stroke="#4a5f8f" />
      <path d="m14 17 5-11" stroke="#c22" strokeWidth="1.500" />
      <path d="M6 35h18v10H6z" fill="#38b5a5" stroke="#555" />
      <path d="M9 38h12M9 42h12" stroke="#125" strokeDasharray="2 1" />
      <path d="M4.500 52v22" stroke="#aaa" strokeDasharray="2 1" />
      <path d="M16 56h12v12H16z" fill="#e9e66c" stroke="#222" />
    </svg>
    <p className="-mt-1 pl-0.5 text-base leading-5 font-bold text-black italic">System</p>
    <div className="mt-0.5 ml-0.5 h-[18px] border border-[#777] bg-white" />
    <div className="ml-1 h-[832px] bg-[#b8c6d4] pl-2">
      <div className="h-full border-l border-dotted border-[#555] bg-[repeating-linear-gradient(#b8c6d4_0_11px,#8593a3_11px_12px)]" />
    </div>
    <p className="pt-1.5 pl-2 text-xs text-[#1a1a70]">A-Z</p>
    <div className="mt-1 ml-2 h-5 border border-[#888]" />
  </div>
);

const ToolWindow = () => (
  <div className="absolute top-[156px] left-0 h-16 w-[53px] bg-white text-[#666]">
    <div className="flex h-[22px] items-center justify-end gap-2.5 bg-[#e6e6e6] pr-2">
      <Icon size={13}><path d="M1.500 1.500h13v13h-13zM4 5.500h8" strokeWidth="2" /></Icon>
      <X size={17} strokeWidth={1.8} />
    </div>
    <div className="flex h-10 items-center justify-end gap-5 pr-1">
      <Undo2 size={16} strokeWidth={2.2} />
      <Trash2 size={16} strokeWidth={1.8} />
    </div>
  </div>
);

const ChatWindow = () => (
  <div className="absolute top-[225px] left-0 h-[687px] w-[58px] overflow-hidden bg-white text-sm text-[#222] shadow-[2px_1px_5px_rgba(0,0,0,0.4)]">
    <div className="flex h-[22px] items-center justify-end gap-3 bg-[#e6e6e7] pr-2 text-[#555]">
      <EllipsisVertical size={13} />
      <Minus size={13} />
    </div>
    <div className="flex h-[33px] items-center justify-end pr-4 text-[#555]"><ChevronDown size={15} /></div>
    <div className="h-10 bg-[#ededee] pl-1 leading-10 text-[#666]">16)</div>
    <div className="relative h-[414px] border-b border-[#dedede] pt-[109px] text-[13px] leading-[18px] whitespace-nowrap">
      <p className="-ml-1.5">00</p>
      <p className="-ml-2">用升级</p>
      <p className="mt-[18px] -ml-1.5">的工作</p>
      <p className="mt-[54px] -ml-2">费）！</p>
      <p>疑 让</p>
      <span className="absolute top-[386px] right-0 h-6 w-1 rounded-sm bg-black" />
    </div>
    <Icon size={16} className="mt-2 ml-4 text-[#555]"><path d="m8 1 6 3.500v7L8 15l-6-3.500v-7z" strokeWidth="1.500" /><circle cx="8" cy="8" r="2" strokeWidth="1.500" /></Icon>
    <button className="mt-[82px] flex h-[30px] w-[38px] items-center gap-1 overflow-hidden rounded-r-full bg-[#dfdfe0] text-xs">
      <span className="-ml-1">送</span>
      <Sep />
      <ChevronDown size={12} className="shrink-0" />
    </button>
  </div>
);

const Sky = () => (
  <svg className="absolute inset-x-0 top-0 h-[156px] w-full" viewBox="0 0 1682 156" preserveAspectRatio="none" aria-hidden="true">
    <defs>
      <filter id="cloud"><feGaussianBlur stdDeviation="4" /></filter>
    </defs>
    <g filter="url(#cloud)" fill="#c9cfd8">
      <path d="M0 0h70l10 12-40 8-14 12-26-6z" fill="#b4bfd2" />
      <path d="M20 0h60v8H26zM0 18l26 6 6 10-20-2z" fill="#dccfc0" />
      <path d="M130 0h90l-20 14h-50zM700 0h120v16H690zM880 0h180v16H890z" fill="#cdc8b4" />
      <path d="M300 0h120v16H330zM540 0h90v16h-80z" fill="#7da0c8" />
    </g>
  </svg>
);

const ClassTimer = () => (
  <div className="absolute top-0 left-[658px] flex h-[31px] w-[158px] items-center justify-center gap-2 bg-white text-xs text-[#1c1c1c] shadow-[0_1px_5px_rgba(0,0,0,0.4)]">
    <span className="h-2 w-2 rounded-full bg-[#2bb88d]" />
    <span>上课中 02:43:32</span>
    <ChevronUp size={14} />
  </div>
);

export default function App() {
  return (
    <div className="relative flex h-screen flex-col overflow-hidden border-t-[3px] border-black bg-[linear-gradient(180deg,#c09ab8_0%,#cb95b3_19%,#eca2ac_32%,#f5bda9_42%,#f9dcac_52%,#f4e0b1_62%,#dac7b5_73%,#b9c6bc_83%,#82cbc9_94%,#7acaca_100%)] pt-[45px] pr-[102px] pb-[14px] pl-[136px] font-['Noto_Sans','Noto_Sans_CJK_SC',sans-serif]">
      <div className="absolute inset-0 bg-[linear-gradient(180deg,#cba5c3_0%,#d5a8c2_25%,#e5a8b6_37%,#f0b9b0_48%,#eed0c0_58%,#c9c8bd_70%,#8ac1c0_82%,#62c4ca_100%)] [mask-image:linear-gradient(90deg,transparent_5%,black_90%)]" />
      <div className="relative flex-1 overflow-hidden bg-[linear-gradient(180deg,#2f7dd2_0%,#3c8fe0_22%,#f8f9fc_80%)]">
        <div className="absolute inset-x-0 top-0 h-4 bg-[linear-gradient(90deg,#2f78cc_0%,#2e6db5_12%,#3c7cc0_20%,#1d5dab_38%,#5f88b4_48%,#6c8aa8_66%,#8f9fa0_70%,#88918f_74%,#06479a_84%,#043b83_100%)]" />
        <Sky />
        <div className="absolute right-0 bottom-0 left-[346px] h-2 bg-[linear-gradient(90deg,#1c6c94,#27567a_60%,#1e2229_70%,#745a4e_80%,#1a4a68)]" />
        <ToolWindow />
        <EditorWindow />
        <span className="absolute top-2 bottom-3 left-[51px] w-0.5 bg-[#d7261b]" />
        <ChatWindow />
        <OfficeWindow />
        <ClassTimer />
        <span className="absolute top-0 left-[838px] h-[10px] w-[70px] rounded-t-sm bg-[#fb1a0c]" />
        <span className="absolute top-[10px] right-0 left-[51px] h-px bg-[#d7261b]" />
        <span className="absolute right-0 bottom-3 left-[51px] h-px bg-[#b93a36]" />
        <span className="absolute top-2 left-[50px] h-3 w-3 border-t-[3px] border-l-[3px] border-[#e8200f]" />
        <span className="absolute bottom-[11px] left-[50px] h-3 w-3 border-b-[3px] border-l-[3px] border-[#e8200f]" />
      </div>
    </div>
  );
}
